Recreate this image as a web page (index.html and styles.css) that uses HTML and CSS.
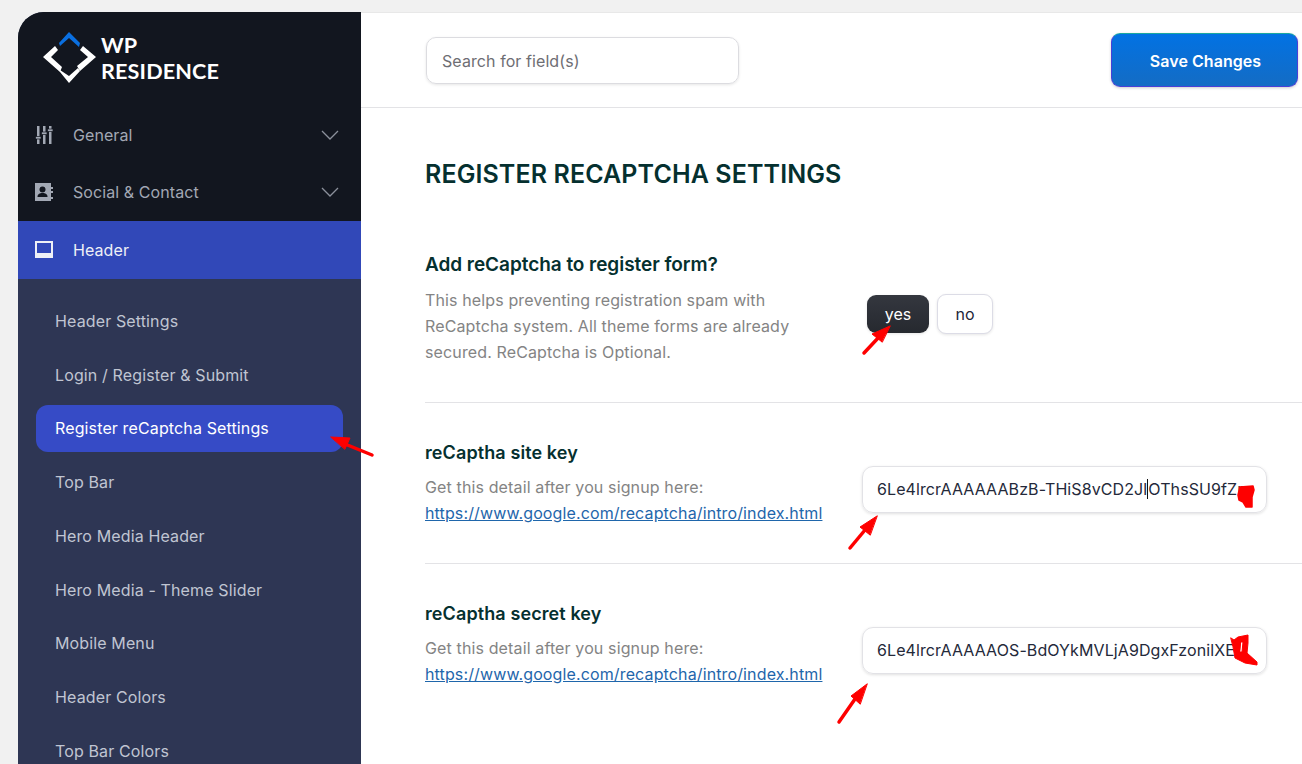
FILE: index.html
```html
<!DOCTYPE html>
<html lang="en">
<head>
    <meta charset="UTF-8">
    <meta name="viewport" content="width=device-width, initial-scale=1.0">
    <title>Register reCaptcha Settings</title>
    <link rel="stylesheet" href="styles.css">
</head>
<body>
    <div class="panel">
        <aside class="sidebar">
            <div class="logo">
                <svg class="logo-mark" width="56" height="54" viewBox="42 31 56 54">
                    <path d="M59 43 69 32 80 43 79 47 69 38 60 46Z" fill="#0a6fe0"/>
                    <path d="M55 46 43 57 60 72 62 67 51 57 58 50Z" fill="#fff"/>
                    <path d="M83 46 96 57 80 71 77 66 88 57 80 50Z" fill="#fff"/>
                    <path d="M60 72 60 70 69 76 78 68 80 71 69 83Z" fill="#fff"/>
                </svg>
                <div class="logo-text">WP<br>RESIDENCE</div>
            </div>

            <nav>
                <a class="nav-item">
                    <svg class="nav-icon" width="18" height="18" viewBox="0 0 18 18" fill="#a2a8b4">
                        <rect x="2" y="0" width="2.5" height="18"/>
                        <rect x="8" y="0" width="2.5" height="18"/>
                        <rect x="14" y="0" width="2.5" height="18"/>
                        <rect x="0.5" y="10.5" width="5.5" height="2.5" stroke="#12161f" stroke-width="0.7"/>
                        <rect x="6.5" y="6" width="5.5" height="2.5" stroke="#12161f" stroke-width="0.7"/>
                        <rect x="12.5" y="3" width="5.5" height="2.5" stroke="#12161f" stroke-width="0.7"/>
                    </svg>
                    <span>General</span>
                    <svg class="chevron" width="18" height="10" viewBox="0 0 18 10"><path d="M1 1 9 9 17 1"/></svg>
                </a>
                <a class="nav-item">
                    <svg class="nav-icon" width="18" height="18" viewBox="0 0 18 18">
                        <path d="M0 0H16V4H18V6H16V8H18V10H16V14H18V16H16V18H0Z" fill="#a2a8b4"/>
                        <circle cx="7.5" cy="6.5" r="3" fill="#12161f"/>
                        <path d="M2.5 14c0-3 2-4 5-4s5 1 5 4Z" fill="#12161f"/>
                    </svg>
                    <span>Social &amp; Contact</span>
                    <svg class="chevron" width="18" height="10" viewBox="0 0 18 10"><path d="M1 1 9 9 17 1"/></svg>
                </a>
                <a class="nav-item nav-item-open">
                    <svg class="nav-icon" width="18" height="18" viewBox="0 0 18 18">
                        <rect x="0" y="0" width="18" height="17" fill="#eef0f6"/>
                        <rect x="2" y="2" width="14" height="10" fill="#3148b8"/>
                    </svg>
                    <span>Header</span>
                </a>
            </nav>

            <ul class="submenu">
                <li>Header Settings</li>
                <li>Login / Register &amp; Submit</li>
                <li class="active">Register reCaptcha Settings</li>
                <li>Top Bar</li>
                <li>Hero Media Header</li>
                <li>Hero Media - Theme Slider</li>
                <li>Mobile Menu</li>
                <li>Header Colors</li>
                <li>Top Bar Colors</li>
            </ul>
        </aside>

        <main class="content">
            <div class="topbar">
                <div class="search">Search for field(s)</div>
                <button class="save-btn" type="button">Save Changes</button>
            </div>

            <div class="settings">
                <h1>REGISTER RECAPTCHA SETTINGS</h1>

                <section class="row row-first">
                    <div class="row-text">
                        <h2>Add reCaptcha to register form?</h2>
                        <p>This helps preventing registration spam with ReCaptcha system. All theme forms are already secured. ReCaptcha is Optional.</p>
                    </div>
                    <div class="toggle">
                        <button class="toggle-btn toggle-on" type="button">yes</button>
                        <button class="toggle-btn" type="button">no</button>
                    </div>
                </section>

                <section class="row">
                    <div class="row-text">
                        <h2>reCaptha site key</h2>
                        <p>Get this detail after you signup here:<br><a href="#">https://www.google.com/recaptcha/intro/index.html</a></p>
                    </div>
                    <div class="key-input"><span>6Le4lrcrAAAAAABzB-THiS8vCD2Jl</span><span class="caret">OThsSU9fZm</span></div>
                </section>

                <section class="row">
                    <div class="row-text">
                        <h2>reCaptha secret key</h2>
                        <p>Get this detail after you signup here:<br><a href="#">https://www.google.com/recaptcha/intro/index.html</a></p>
                    </div>
                    <div class="key-input"><span>6Le4lrcrAAAAAOS-BdOYkMVLjA9DgxFzonilXE</span></div>
                </section>
            </div>
        </main>
    </div>

    <!-- red marks someone drew on top of the screenshot -->
    <svg class="marks" width="1302" height="764" viewBox="0 0 1302 764">
        <g fill="#fe0000" stroke="#fe0000" stroke-linecap="round" stroke-linejoin="round">
            <path d="M864 353 879 337" stroke-width="3.5" fill="none"/>
            <path d="M890 326 872 334 882 342Z"/>
            <path d="M372 455 345 444" stroke-width="3.5" fill="none"/>
            <path d="M331 437 350 438 345 449Z"/>
            <path d="M850 548 865 530" stroke-width="3.5" fill="none"/>
            <path d="M877 516 860 527 870 535Z"/>
            <path d="M839 722 855 699" stroke-width="3.5" fill="none"/>
            <path d="M867 684 851 696 860 704Z"/>
            <path d="M1238 495 1240 487 1253 486 1254 490 1252 497 1252 507 1246 507 1243 502 1239 500Z" stroke-width="1.5"/>
            <path fill-rule="evenodd" stroke-width="1" d="M1231 638 1234 640 1238 637 1248 635 1248 643 1247 653 1257 662 1257 665 1245 663 1235 658 1233 647ZM1241 642 1243 642 1242 652 1240 652Z"/>
        </g>
    </svg>
</body>
</html>
```

FILE: styles.css
```css
html, body {
    margin: 0;
    height: 764px;
    overflow: hidden;
}
body {
    background-color: #f1f1f1;
    font-family: Inter, "Liberation Sans", sans-serif;
    font-size: 16px;
    padding: 12px 0 0 18px;
    box-sizing: border-box;
}
.panel {
    display: flex;
    height: 752px;
    background-color: white;
    border-top-left-radius: 26px;
    overflow: hidden;
}

/* sidebar */
.sidebar {
    width: 343px;
    flex-shrink: 0;
    background-color: #2e3654;
}
.logo {
    display: flex;
    gap: 3px;
    height: 87px;
    padding: 19px 0 0 24px;
    box-sizing: border-box;
    background-color: #12161f;
}
.logo-text {
    font-family: Lato, sans-serif;
    font-size: 21.6px;
    font-weight: 700;
    line-height: 26px;
    letter-spacing: 0.15px;
    color: white;
    margin-top: 1px;
}
nav {
    background-color: #12161f;
    padding-top: 7px;
}
.nav-item {
    display: flex;
    align-items: center;
    height: 57px;
    padding: 0 22px 0 17px;
    color: #a2a8b4;
    letter-spacing: 0.08px;
}
.nav-item span {
    margin-left: 20px;
    flex-grow: 1;
}
.nav-item:nth-child(2) {
    height: 58px;
}
.nav-item-open {
    height: 58px;
    background-color: #3148b8;
    color: #eef0f6;
}
.chevron path {
    fill: none;
    stroke: #8b909b;
    stroke-width: 1.3;
}
.submenu {
    list-style: none;
    margin: 0;
    padding: 18.25px 18px 0;
    color: #c0c5d2;
    letter-spacing: 0.13px;
}
.submenu li {
    display: flex;
    align-items: center;
    height: 47px;
    margin-bottom: 6.75px;
    padding-left: 19px;
    border-radius: 12px;
}
.submenu .active {
    background-color: #364bc6;
    color: white;
}

/* right side */
.content {
    flex-grow: 1;
    min-width: 0;
}
.topbar {
    display: flex;
    align-items: center;
    justify-content: space-between;
    height: 96px;
    padding: 0 4px 0 65px;
    box-sizing: border-box;
    border-bottom: 1px solid #e3e3e6;
    border-top: 1px solid #e8e8e8;
}
.search {
    display: flex;
    align-items: center;
    width: 313px;
    height: 47px;
    padding: 1px 0 0 15px;
    box-sizing: border-box;
    border: 1px solid #dcdce0;
    border-radius: 10px;
    box-shadow: 0 1px 3px rgba(0,0,0,0.1);
    color: #6e6e73;
    letter-spacing: 0.08px;
}
.save-btn {
    width: 187px;
    height: 54px;
    padding: 1px 0 0 2px;
    border: 1.5px solid #4b3fd6;
    border-top-color: #1aa8a0;
    border-radius: 9px;
    background: linear-gradient(#0272e3, #146cc4);
    box-shadow: 0 1px 3px rgba(0,0,0,0.2);
    color: white;
    font-family: inherit;
    font-size: 16px;
    font-weight: 600;
    letter-spacing: 0.05px;
}
.settings {
    padding-left: 64px;
}
h1 {
    margin: 0;
    padding-top: 51px;
    font-size: 25px;
    line-height: 30px;
    font-weight: 600;
    letter-spacing: 0.1px;
    color: #05302f;
}
.row {
    display: flex;
    justify-content: space-between;
    height: 161px;
    padding: 37px 35px 0 0;
    box-sizing: border-box;
    border-top: 1px solid #e3e3e6;
}
.row-first {
    height: 213px;
    padding-top: 63px;
    border-top: none;
}
.row-text {
    width: 400px;
}
h2 {
    margin: 0 0 8px;
    font-size: 18px;
    line-height: 26px;
    font-weight: 600;
    letter-spacing: 0.1px;
    color: #05302f;
}
.row-first h2 {
    margin-bottom: 9px;
    font-size: 19px;
    letter-spacing: -0.05px;
    white-space: nowrap;
}
p {
    margin: 0;
    line-height: 26px;
    color: #848484;
    letter-spacing: 0.13px;
}
p a {
    color: #1f66ab;
    text-decoration: underline;
}
.row-first p {
    width: 385px;
}

/* yes / no buttons */
.toggle {
    display: flex;
    align-items: center;
    gap: 8px;
    align-self: flex-start;
    width: 405px;
    margin-top: 42px;
    padding-left: 5px;
    box-sizing: border-box;
}
.toggle-btn {
    width: 56px;
    height: 40px;
    padding: 0;
    border: 1px solid #dcdce6;
    border-radius: 9px;
    background-color: white;
    box-shadow: 0 1px 3px rgba(0,0,0,0.1);
    color: #23263a;
    font-family: inherit;
    font-size: 16px;
}
.toggle-on {
    width: 62px;
    height: 38px;
    border: none;
    background: linear-gradient(#34373f, #26292f);
    color: white;
}

/* key fields */
.key-input {
    display: flex;
    align-items: center;
    width: 405px;
    height: 47px;
    margin-top: 26px;
    padding: 0 0 2px 14px;
    box-sizing: border-box;
    border: 1px solid #e2e2e6;
    border-radius: 11px;
    box-shadow: 0 1px 3px rgba(0,0,0,0.12);
    color: #24293a;
    letter-spacing: 0.1px;
    white-space: nowrap;
}
.caret {
    border-left: 1px solid #111;
    line-height: 20px;
}

/* annotations over the whole picture */
.marks {
    position: absolute;
    left: 0;
    top: 0;
    pointer-events: none;
}
```
